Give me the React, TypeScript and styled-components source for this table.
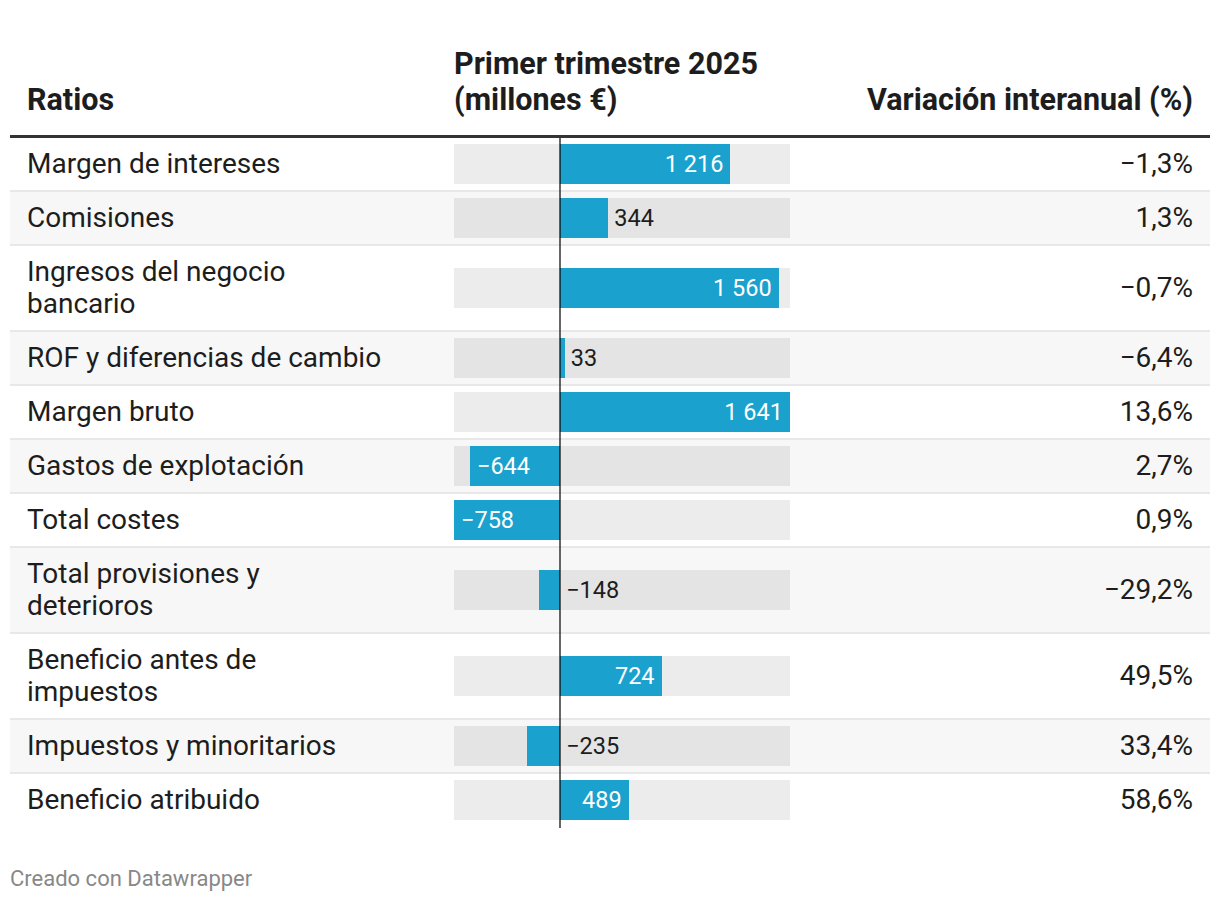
import styled, { createGlobalStyle } from 'styled-components';

const GlobalStyle = createGlobalStyle`
	body {
		margin: 0;
		background: #fff;
		font-family: Roboto, 'Liberation Sans', sans-serif;
		color: #1d1d1d;
	}
`;

const MIN = -758;
const MAX = 1641;
const TRACK = 336;
const scale = TRACK / (MAX - MIN);
const ZERO = -MIN * scale;

interface Row {
	label: string;
	value: number;
	change: string;
}

const rows: Row[] = [
	{ label: 'Margen de intereses', value: 1216, change: '−1,3%' },
	{ label: 'Comisiones', value: 344, change: '1,3%' },
	{ label: 'Ingresos del negocio bancario', value: 1560, change: '−0,7%' },
	{ label: 'ROF y diferencias de cambio', value: 33, change: '−6,4%' },
	{ label: 'Margen bruto', value: 1641, change: '13,6%' },
	{ label: 'Gastos de explotación', value: -644, change: '2,7%' },
	{ label: 'Total costes', value: -758, change: '0,9%' },
	{ label: 'Total provisiones y deterioros', value: -148, change: '−29,2%' },
	{ label: 'Beneficio antes de impuestos', value: 724, change: '49,5%' },
	{ label: 'Impuestos y minoritarios', value: -235, change: '33,4%' },
	{ label: 'Beneficio atribuido', value: 489, change: '58,6%' },
];

function formatNumber(n: number) {
	const abs = Math.abs(n)
		.toString()
		.replace(/\B(?=(\d{3})+(?!\d))/g, '\u00a0');
	return (n < 0 ? '−' : '') + abs;
}

function Bar({ value }: { value: number }) {
	const width = Math.abs(value) * scale;
	const left = value >= 0 ? ZERO : ZERO - width;
	const inside = width > 60;
	const text = formatNumber(value);

	let labelStyle: React.CSSProperties;
	if (inside) {
		labelStyle =
			value >= 0
				? { right: TRACK - (left + width) + 7 }
				: { left: left + 7 };
	} else {
		labelStyle = { left: (value >= 0 ? left + width : ZERO) + 6 };
	}

	return (
		<Track>
			<Fill style={{ left, width }} />
			<BarLabel inside={inside} style={labelStyle}>
				{text}
			</BarLabel>
		</Track>
	);
}

export default function App() {
	return (
		<>
			<GlobalStyle />
			<Wrapper>
				<Table>
					<HeaderRow>
						<HeadCell>Ratios</HeadCell>
						<HeadCell flush>
							Primer trimestre 2025
							<br />
							(millones €)
						</HeadCell>
						<HeadCell right>Variación interanual (%)</HeadCell>
					</HeaderRow>
					{rows.map((row, i) => (
						<BodyRow key={row.label} striped={i % 2 === 1} last={i === rows.length - 1}>
							<LabelCell>
								<LabelText>{row.label}</LabelText>
							</LabelCell>
							<BarCell>
								<Bar value={row.value} />
							</BarCell>
							<ChangeCell>{row.change}</ChangeCell>
						</BodyRow>
					))}
				</Table>
				<Footer>Creado con Datawrapper</Footer>
			</Wrapper>
		</>
	);
}

const Wrapper = styled.div`
	padding: 46px 10px 0;
`;

const Table = styled.div`
	display: flex;
	flex-direction: column;
`;

const columns = `444px 336px 1fr`;

const HeaderRow = styled.div`
	display: grid;
	grid-template-columns: ${columns};
	align-items: end;
	border-bottom: 3px solid #333;
	padding-bottom: 17px;
`;

const HeadCell = styled.div<{ flush?: boolean; right?: boolean }>`
	font-size: 30.5px;
	font-weight: 700;
	line-height: 36px;
	white-space: nowrap;
	padding: ${(p) => (p.flush ? '0' : '0 17px')};
	text-align: ${(p) => (p.right ? 'right' : 'left')};
	color: #1d1d1d;
`;

const BodyRow = styled.div<{ striped: boolean; last: boolean }>`
	display: grid;
	grid-template-columns: ${columns};
	background: ${(p) => (p.striped ? '#f7f7f7' : '#fff')};
	border-bottom: 2px solid ${(p) => (p.last ? 'transparent' : '#e8e8e8')};
`;

const LabelCell = styled.div`
	padding: 10px 17px;
`;

const LabelText = styled.div`
	font-size: 28px;
	line-height: 32px;
	max-width: 358px;
`;

const BarCell = styled.div`
	position: relative;
	display: flex;
	align-items: center;

	&::after {
		content: '';
		position: absolute;
		left: ${ZERO - 1}px;
		top: 0;
		bottom: -2px;
		width: 2px;
		background: rgba(0, 0, 0, 0.6);
	}
`;

const ChangeCell = styled.div`
	font-size: 28px;
	line-height: 32px;
	padding: 10px 17px;
	text-align: right;
	align-self: center;
`;

const Track = styled.div`
	position: relative;
	width: ${TRACK}px;
	height: 40px;
	background: rgba(0, 0, 0, 0.075);
`;

const Fill = styled.div`
	position: absolute;
	top: 0;
	bottom: 0;
	background: #1aa1ce;
`;

const BarLabel = styled.span<{ inside: boolean }>`
	position: absolute;
	top: 0;
	line-height: 40px;
	font-size: 23.5px;
	white-space: nowrap;
	color: ${(p) => (p.inside ? '#fff' : '#1d1d1d')};
`;

const Footer = styled.div`
	margin-top: 39px;
	font-size: 22px;
	line-height: 24px;
	color: #888;
`;
